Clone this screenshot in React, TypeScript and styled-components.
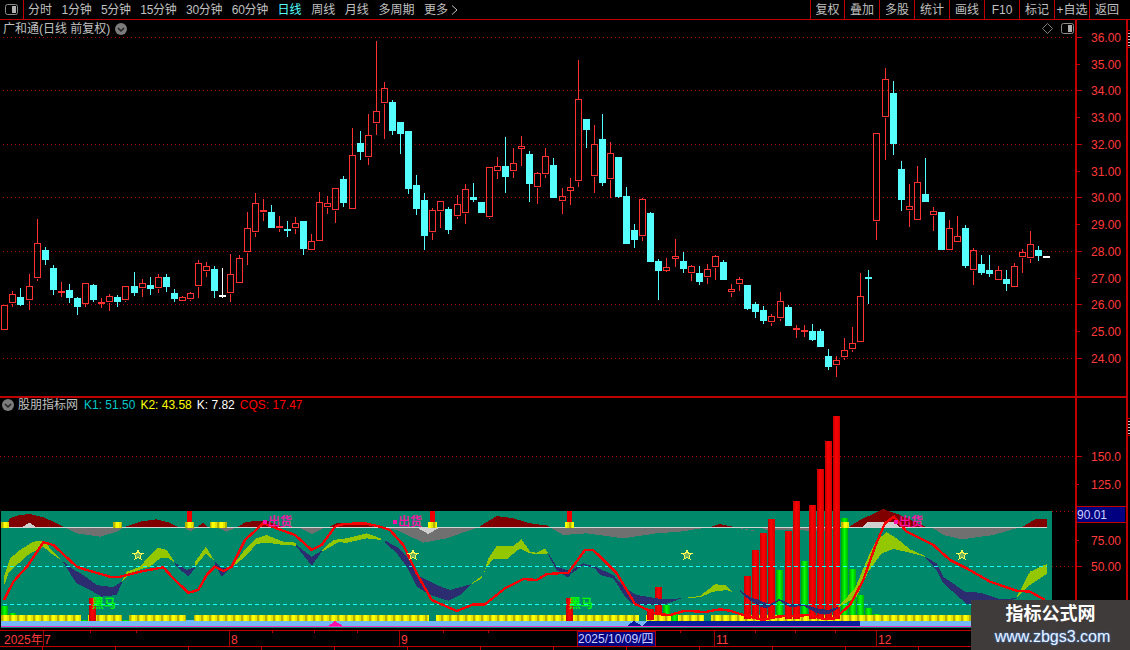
import React from "react";
import styled, { createGlobalStyle } from "styled-components";

const LINE = "#c00000";
const AXIS_RED = "#ff3a3a";
const FONT = `"Liberation Sans", "Noto Sans CJK SC", sans-serif`;

const GlobalStyle = createGlobalStyle`
  html, body { margin: 0; padding: 0; background: #000; overflow: hidden; }
`;

const Page = styled.div`
  position: relative;
  width: 1130px;
  height: 650px;
  overflow: hidden;
  background: #000;
  color: #c0c0c0;
  font: 12px/14px ${FONT};
`;

/* ---------- toolbar ---------- */
const Toolbar = styled.header`
  display: flex;
  height: 20px;
  box-sizing: border-box;
  border-bottom: 1px solid ${LINE};
`;
const LayoutButton = styled.div`
  width: 24px;
  box-sizing: border-box;
  border-right: 1px solid ${LINE};
  display: flex;
  align-items: center;
  justify-content: center;
  padding-bottom: 1px;
`;
const Periods = styled.nav`
  display: flex;
  align-items: center;
  gap: 9.6px;
  padding-left: 4px;
`;
const Period = styled.span<{ $active?: boolean; $tight?: boolean }>`
  color: ${(p) => (p.$active ? "#55ffff" : "#c0c0c0")};
  letter-spacing: ${(p) => (p.$tight ? "-0.3px" : "0")};
  display: inline-flex;
  align-items: center;
  gap: 3px;
  white-space: nowrap;
`;
const Actions = styled.div`
  display: flex;
  margin-left: auto;
`;
const Action = styled.div<{ $w?: number }>`
  box-sizing: border-box;
  width: ${(p) => p.$w ?? 35}px;
  padding-right: ${(p) => ((p.$w ?? 35) > 40 ? 6 : 0)}px;
  border-left: 1px solid ${LINE};
  display: flex;
  align-items: center;
  justify-content: center;
  white-space: nowrap;
`;

/* ---------- panes ---------- */
const Workspace = styled.div`
  display: flex;
  height: 610px;
`;
const ChartColumn = styled.div`
  width: 1077px;
  box-sizing: border-box;
  border-right: 2px solid ${LINE};
`;
const AxisColumn = styled.div`
  width: 51px;
  box-sizing: border-box;
  border-right: 2px solid ${LINE};
`;
const Rail = styled.div`
  width: 3px;
  position: relative;
`;
const RailChip = styled.div<{ $top: number }>`
  position: absolute;
  top: ${(p) => p.$top}px;
  left: 0;
  width: 3px;
  height: 18px;
  box-sizing: border-box;
  border-top: 1px solid ${LINE};
  border-bottom: 1px solid ${LINE};
  background: repeating-linear-gradient(#000 0 2px, #c8c8c8 2px 3px);
`;
const PricePane = styled.section`
  position: relative;
  height: 378px;
  box-sizing: border-box;
  border-bottom: 2px solid ${LINE};
`;
const IndicatorPane = styled.section`
  position: relative;
  height: 232px;
`;
const AxisCell = styled.div<{ $h: number }>`
  height: ${(p) => p.$h}px;
  box-sizing: border-box;
  &:first-child { border-bottom: 2px solid ${LINE}; }
`;
const ChartSvg = styled.svg`
  display: block;
  shape-rendering: crispEdges;
`;
const PaneTitle = styled.div`
  position: absolute;
  left: 3px;
  top: 2px;
  display: flex;
  align-items: center;
  gap: 5px;
  color: #c0c0c0;
  white-space: nowrap;
`;
const PaneTools = styled.div`
  position: absolute;
  right: 1px;
  top: 3px;
  display: flex;
  align-items: center;
  gap: 8px;
`;
const Legend = styled.div`
  position: absolute;
  left: 2px;
  top: 0px;
  display: flex;
  align-items: center;
  gap: 5px;
  white-space: nowrap;
  color: #c0c0c0;
`;
const LegendName = styled.span`
  margin: 0 1px 0 -1px;
`;
const LegendValue = styled.span<{ $c: string }>`
  color: ${(p) => p.$c};
`;
const AxisLabel = styled.text`
  font: 12px ${FONT};
  fill: ${AXIS_RED};
`;
const BoxLabel = styled(AxisLabel)`
  fill: #d0d0ff;
`;
const Mark = styled.text<{ $c: string }>`
  font: 12px ${FONT};
  fill: ${(p) => p.$c};
  stroke: ${(p) => p.$c};
  stroke-width: 0.35px;
`;

/* ---------- time axis ---------- */
const TimeAxis = styled.div`
  height: 17px;
  box-sizing: border-box;
  border-top: 1px solid ${LINE};
  border-bottom: 1px solid ${LINE};
`;
const BottomStrip = styled.div`
  height: 3px;
  background: repeating-linear-gradient(90deg, transparent 0 42px, ${LINE} 42px 43px, transparent 43px 73px);
`;

/* ---------- watermark ---------- */
const Watermark = styled.aside`
  position: absolute;
  left: 971px;
  top: 600px;
  width: 159px;
  height: 50px;
  background: #3f3b3b;
  display: flex;
  flex-direction: column;
  align-items: center;
  padding-top: 3px;
  box-sizing: border-box;
`;
const WatermarkTitle = styled.div`
  color: #fff;
  font: bold 18px/22px ${FONT};
`;
const WatermarkUrl = styled.div`
  color: #e8f2ff;
  font: 16px/20px ${FONT};
  margin: 2px 0 0 4px;
  text-shadow: 0 0 2px #3c8cff;
`;

/* ---------- data ---------- */
type C = [number, number, number, number, number];
const g = (y0: number, rows: C[]): C[] =>
  rows.map(([t, a, b, c, d]) => [t, y0 + a / 3, y0 + b / 3, y0 + c / 3, y0 + d / 3] as C);

const candles: C[] = [
  ...g(190, [
    [0, 345, 345, 420, 420], [0, 304, 313, 341, 351], [1, 294, 321, 345, 347], [0, 252, 289, 332, 360],
    [0, 87, 160, 266, 273], [1, 171, 180, 210, 225], [1, 225, 234, 300, 315], [0, 276, 304, 308, 320],
    [1, 282, 300, 324, 339], [1, 321, 324, 351, 375], [0, 280, 280, 342, 351], [1, 282, 285, 330, 336],
    [0, 324, 337, 337, 354], [0, 312, 319, 338, 363], [1, 315, 321, 336, 351], [0, 289, 289, 332, 335],
    [1, 246, 288, 309, 318], [0, 267, 280, 296, 321], [1, 261, 285, 297, 315], [0, 252, 262, 296, 309],
    [1, 252, 261, 291, 306], [1, 297, 309, 327, 336], [0, 318, 322, 335, 335], [0, 306, 310, 329, 333],
    [0, 210, 220, 290, 324], [0, 216, 229, 245, 261], [1, 228, 237, 303, 324], [2, 234, 316, 316, 324],
    [0, 192, 253, 311, 336], [0, 196, 205, 281, 282], [0, 66, 115, 188, 225], [0, 9, 40, 128, 141],
    [0, 27, 61, 68, 93],
  ]),
  ...g(30, [
    [1, 525, 546, 594, 594], [0, 558, 589, 596, 606], [1, 573, 598, 598, 621], [0, 561, 580, 596, 612],
    [1, 573, 573, 657, 675], [0, 612, 634, 660, 660], [0, 486, 517, 635, 635], [0, 498, 520, 533, 552],
    [0, 475, 475, 542, 579], [1, 438, 447, 519, 531], [0, 294, 376, 539, 539], [1, 303, 339, 366, 390],
    [0, 252, 316, 383, 405], [0, 33, 244, 281, 315], [0, 156, 175, 221, 327], [1, 210, 216, 303, 315],
    [1, 276, 276, 312, 372], [1, 303, 303, 477, 492], [1, 435, 465, 537, 555], [1, 489, 510, 618, 660],
    [0, 534, 541, 608, 630], [0, 514, 514, 545, 594], [1, 531, 537, 600, 612], [0, 495, 523, 560, 567],
    [0, 462, 478, 551, 582], [1, 459, 501, 510, 516], [1, 516, 516, 549, 549], [0, 412, 412, 563, 567],
    [0, 381, 409, 425, 447], [1, 321, 408, 441, 489], [0, 354, 400, 425, 444], [0, 318, 349, 358, 408],
    [1, 363, 372, 462, 516], [0, 426, 430, 473, 522],
  ]),
  ...g(50, [
    [0, 294, 319, 374, 384], [1, 324, 345, 444, 444], [0, 415, 439, 455, 492], [0, 384, 412, 423, 465],
    [0, 30, 148, 395, 411], [1, 207, 207, 240, 294], [0, 225, 283, 380, 429], [1, 192, 267, 399, 408],
    [0, 276, 310, 389, 444], [1, 321, 321, 441, 444], [1, 411, 438, 582, 582], [1, 522, 540, 570, 594],
    [0, 444, 448, 560, 573], [1, 486, 489, 636, 636], [1, 627, 633, 663, 750], [0, 624, 652, 663, 666],
    [0, 567, 618, 626, 651], [1, 606, 633, 657, 669], [0, 645, 649, 671, 693], [1, 648, 669, 696, 705],
    [0, 642, 658, 683, 702], [0, 615, 619, 653, 690], [1, 630, 636, 690, 690], [0, 702, 718, 728, 741],
    [0, 681, 688, 704, 723], [1, 705, 705, 777, 780], [1, 756, 762, 786, 804], [1, 768, 780, 813, 822],
    [0, 793, 799, 818, 828], [0, 726, 754, 806, 813], [1, 765, 771, 828, 828], [0, 825, 835, 835, 864],
    [0, 825, 841, 847, 861], [1, 822, 843, 870, 873], [1, 837, 843, 891, 891], [1, 897, 918, 951, 960],
    [0, 918, 931, 947, 981], [0, 864, 901, 923, 930], [0, 831, 880, 899, 906], [0, 669, 739, 878, 878],
    [1, 660, 682, 682, 762], [0, 250, 250, 515, 570], [0, 54, 88, 203, 330], [1, 93, 129, 282, 315],
    [1, 333, 357, 450, 483], [0, 402, 469, 482, 531], [0, 348, 397, 512, 513], [1, 324, 432, 456, 456],
    [0, 472, 484, 497, 543], [1, 486, 486, 600, 600], [0, 510, 535, 602, 602], [0, 498, 559, 578, 578],
    [1, 525, 534, 648, 654], [0, 594, 601, 662, 705], [1, 615, 642, 669, 675], [1, 615, 660, 672, 681],
    [0, 648, 661, 692, 692], [1, 660, 687, 702, 723], [0, 640, 649, 713, 713], [0, 597, 607, 623, 669],
    [0, 543, 583, 626, 639], [1, 588, 600, 618, 633], [2, 619, 619, 619, 619],
  ]),
];

type P = [number, number];
const z4 = (p: P[]): P[] => p.map(([x, y]) => [x / 3, 510 + y / 3]);
const z5 = (p: P[]): P[] => p.map(([x, y]) => [380 + x / 3, 510 + y / 3]);
const z6 = (p: P[]): P[] => p.map(([x, y]) => [740 + x / 3, 400 + y / 3]);
const pts = (p: P[]) => p.map(([x, y]) => `${x.toFixed(1)},${y.toFixed(1)}`).join(" ");
const band = (t: P[], b: P[]) => pts([...t, ...[...b].reverse()]);

const OLIVE = "#93c800";
const NAVY = "#2b2d70";
const DARKRED = "#800000";
const GRAY = "#707070";
const LIGHT = "#cfcfcf";

const ribbons: [string, string][] = [
  [OLIVE, band(z4([[12, 200], [30, 145], [60, 120], [100, 95], [130, 92], [160, 125], [185, 150]]), z4([[12, 228], [25, 190], [50, 165], [90, 130], [130, 110], [160, 135], [185, 150]]))],
  [NAVY, band(z4([[185, 150], [215, 175], [250, 195], [290, 225], [340, 232], [365, 215]]), z4([[185, 150], [210, 190], [230, 220], [270, 240], [305, 260], [350, 255], [365, 220]]))],
  [OLIVE, band(z4([[365, 215], [380, 185], [420, 170], [450, 135], [475, 113], [500, 120], [525, 158]]), z4([[365, 215], [385, 195], [420, 178], [450, 170], [480, 145], [505, 145], [525, 158]]))],
  [NAVY, band(z4([[525, 158], [560, 180], [585, 172]]), z4([[525, 165], [565, 200], [585, 175]]))],
  [OLIVE, band(z4([[585, 155], [618, 110], [645, 155]]), z4([[585, 170], [618, 130], [645, 155]]))],
  [NAVY, band(z4([[645, 155], [665, 175], [695, 170]]), z4([[645, 165], [665, 200], [695, 172]]))],
  [OLIVE, band(z4([[695, 170], [730, 125], [770, 85], [800, 75], [850, 95], [888, 98]]), z4([[695, 172], [730, 145], [770, 102], [800, 98], [850, 105], [888, 107]]))],
  [NAVY, band(z4([[888, 105], [935, 140], [965, 122]]), z4([[888, 108], [935, 167], [965, 125]]))],
  [OLIVE, band(z4([[965, 122], [1000, 90], [1040, 85], [1100, 70], [1142, 85]]), z4([[965, 125], [1015, 97], [1040, 98], [1100, 85], [1142, 90]]))],
  [NAVY, band(z5([[15, 92], [50, 110], [80, 140], [120, 200], [170, 225], [210, 240], [275, 222]]), z5([[15, 98], [50, 130], [80, 170], [110, 230], [150, 255], [205, 272], [240, 255], [275, 222]]))],
  [OLIVE, band(z5([[275, 220], [310, 195], [325, 145], [350, 108], [400, 108], [425, 88], [450, 125], [470, 128], [495, 115], [505, 130]]), z5([[275, 222], [305, 205], [320, 170], [340, 148], [380, 148], [420, 115], [450, 130], [480, 133], [505, 130]]))],
  [NAVY, band(z5([[505, 130], [530, 170], [575, 185]]), z5([[505, 135], [530, 180], [565, 203], [580, 180]]))],
  [NAVY, band(z5([[575, 180], [610, 160], [645, 170], [700, 195], [735, 235], [770, 255], [850, 268], [905, 265]]), z5([[575, 190], [610, 165], [645, 175], [660, 195], [700, 205], [735, 260], [760, 285], [800, 285], [850, 285], [905, 265]]))],
  [OLIVE, band(z5([[905, 265], [960, 258], [1005, 223], [1035, 225], [1055, 245], [1080, 240]]), z5([[905, 265], [960, 262], [1000, 245], [1040, 240], [1055, 245], [1080, 240]]))],
  [NAVY, band(z5([[1080, 240], [1110, 262], [1140, 270]]), z5([[1080, 245], [1110, 272], [1140, 288]]))],
  [NAVY, band(z6([[60, 602], [90, 612], [118, 597], [150, 612], [190, 612], [230, 625], [265, 630], [295, 620]]), z6([[60, 620], [80, 625], [118, 602], [150, 622], [190, 617], [230, 640], [265, 643], [295, 625]]))],
  [OLIVE, band(z6([[295, 620], [345, 565], [385, 470], [410, 420], [440, 397], [470, 415], [510, 448], [555, 468]]), z6([[295, 622], [350, 590], [385, 515], [425, 460], [460, 447], [510, 458], [555, 470]]))],
  [NAVY, band(z6([[555, 470], [590, 490], [610, 530], [675, 575], [720, 578], [780, 597], [830, 595]]), z6([[555, 472], [590, 510], [610, 550], [680, 612], [780, 610], [830, 595]]))],
  [OLIVE, band(z6([[830, 590], [870, 515], [920, 492]]), z6([[830, 592], [870, 555], [920, 522]]))],
];

const redLine: P[] = [
  ...z4([[12, 270], [40, 215], [85, 165], [130, 97], [160, 105], [230, 170], [260, 180], [330, 200], [360, 200], [420, 185], [490, 172], [520, 205], [565, 248], [595, 240], [620, 195], [645, 170], [670, 183], [695, 170], [735, 90], [790, 40], [830, 55], [885, 75], [935, 120], [965, 105], [1005, 50], [1030, 42], [1095, 40], [1140, 50]]),
  ...z5([[30, 60], [70, 105], [110, 190], [155, 270], [230, 303], [280, 283], [315, 283], [375, 235], [430, 207], [470, 210], [500, 192], [565, 188], [615, 120], [640, 120], [710, 190], [765, 282], [830, 312], [870, 315], [915, 302], [975, 306], [1020, 298], [1050, 302], [1090, 315], [1140, 328]]),
  ...z6([[70, 660], [110, 650], [140, 648], [215, 645], [250, 657], [285, 655], [330, 615], [370, 540], [405, 440], [435, 370], [462, 350], [500, 395], [580, 435], [630, 480], [680, 505], [750, 545], [830, 572], [870, 575], [915, 600]]),
];

const hills: [string, P[]][] = [
  [DARKRED, z4([[15, 52], [30, 25], [60, 15], [90, 12], [130, 22], [160, 35], [195, 52]])],
  [DARKRED, z4([[370, 52], [420, 35], [470, 28], [510, 38], [535, 52]])],
  [DARKRED, z4([[590, 52], [610, 38], [625, 52]])],
  [DARKRED, z4([[710, 52], [740, 35], [800, 32], [830, 45], [860, 52]])],
  [DARKRED, z4([[985, 52], [1010, 40], [1080, 40], [1100, 45], [1130, 52]])],
  [DARKRED, z5([[295, 52], [350, 18], [400, 25], [450, 40], [505, 47], [507, 52]])],
  [DARKRED, z5([[987, 52], [1020, 42], [1068, 52]])],
  [DARKRED, z6([[325, 382], [360, 360], [430, 327], [480, 345], [560, 382]])],
  [DARKRED, z6([[845, 382], [885, 358], [920, 357], [920, 382]])],
  [LIGHT, z4([[65, 52], [88, 38], [110, 52]])],
  [LIGHT, z6([[365, 382], [385, 365], [460, 365], [480, 382]])],
  [GRAY, z4([[195, 52], [230, 70], [300, 80], [350, 65], [372, 52]])],
  [GRAY, z4([[555, 52], [570, 65], [590, 52]])],
  [GRAY, z4([[650, 52], [680, 65], [710, 52]])],
  [GRAY, z4([[895, 52], [935, 72], [975, 52]])],
  [GRAY, z5([[0, 52], [50, 60], [130, 98], [200, 85], [295, 52]])],
  [LIGHT, z5([[110, 52], [145, 72], [180, 52]])],
  [GRAY, z5([[510, 52], [550, 75], [620, 70], [730, 85], [830, 70], [900, 65], [985, 52]])],
  [GRAY, z5([[1070, 52], [1100, 60], [1140, 65]])],
  [GRAY, z6([[60, 382], [80, 390], [170, 390], [250, 395], [302, 382]])],
  [GRAY, z6([[575, 382], [610, 405], [665, 418], [760, 405], [840, 382]])],
];

/* x centre, top, bottom */
const bigRed: [number, number, number][] = [
  ...[[22, 528], [46, 450], [70, 400], [94, 357], [145, 393], [169, 303], [217, 315], [241, 207], [265, 123], [289, 48]].map(
    ([x, y]) => [Math.round(740 + x / 3), 400 + y / 3, 619] as [number, number, number]
  ),
  [658, 587, 615], [650, 609, 620], [92, 598, 621], [569, 598, 621],
];
const greens: [number, number, number][] = [
  ...[[118, 510], [193, 483], [313, 354], [337, 507], [361, 585], [385, 624], [409, 642]].map(
    ([x, y]) => [Math.round(740 + x / 3), 400 + y / 3, 615] as [number, number, number]
  ),
  [666, 605, 615], [674, 613, 621], [4, 606, 615], [12, 613, 615], [84, 620, 621], [125, 620, 621],
];
const yellowBand: [number, number][] = [
  [1, 81], [88, 122], [129, 186], [194, 429], [436, 639], [646, 671], [678, 704], [711, 1047],
];
const chips: [number, number][] = [[1, 9], [113, 122], [185, 194], [210, 227], [428, 437], [565, 574], [841, 849]];
const stars: number[] = [138, 413, 687, 962];

const starPoints = (cx: number, cy: number, r: number) =>
  pts(
    Array.from({ length: 10 }, (_, i): P => {
      const a = -Math.PI / 2 + (i * Math.PI) / 5;
      const rr = i % 2 ? r * 0.45 : r;
      return [cx + rr * Math.cos(a), cy + rr * Math.sin(a)];
    })
  );

const priceY = (p: number) => 197.3 - (p - 30) * 26.75;
const prices = [36, 35, 34, 33, 32, 31, 30, 29, 28, 27, 26, 25, 24];

/* ---------- small drawings ---------- */
const LayoutIcon = () => (
  <svg width="13" height="11" viewBox="0 0 13 11">
    <rect x="0.5" y="0.5" width="12" height="10" rx="2" fill="none" stroke="#8c8c8c" />
    <rect x="7" y="2" width="4" height="7" fill="#b0b0b0" />
  </svg>
);
const ChevronBadge = () => (
  <svg width="12" height="12" viewBox="0 0 12 12">
    <circle cx="6" cy="6" r="6" fill="#7c7c7c" />
    <path d="M3 5l3 3 3-3" fill="none" stroke="#222" strokeWidth="1.5" />
  </svg>
);
const Diamond = () => (
  <svg width="11" height="11" viewBox="0 0 11 11">
    <path d="M5.5 0.5l5 5-5 5-5-5z" fill="none" stroke="#7c7c7c" />
  </svg>
);
const MoreChevron = () => (
  <svg width="7" height="10" viewBox="0 0 7 10">
    <path d="M1 0.5l5 4.5-5 4.5" fill="none" stroke="#c0c0c0" />
  </svg>
);

const Candle = ({ c, i }: { c: C; i: number }) => {
  const [t, wt, bt, bb, wb] = c;
  const x = Math.round(4.33 + 8.075 * i);
  const col = t === 0 ? "#ff3232" : t === 1 ? "#55ffff" : "#ffffff";
  if (bt === bb) {
    return (
      <g fill={col}>
        <rect x={x} y={wt} width={1} height={wb - wt} />
        <rect x={x - 3} y={bt} width={7} height={1.4} />
      </g>
    );
  }
  return (
    <g fill={col}>
      <rect x={x} y={wt} width={1} height={Math.max(0, bt - wt)} />
      <rect x={x} y={bb} width={1} height={Math.max(0, wb - bb)} />
      {t === 0 ? (
        <rect x={x - 2.5} y={Math.round(bt) + 0.5} width={6} height={Math.max(1, Math.round(bb - bt) - 1)} fill="none" stroke={col} />
      ) : (
        <rect x={x - 3} y={bt} width={7} height={bb - bt} />
      )}
    </g>
  );
};

const GridLine = ({ y, x1 = 3, x2 = 1075 }: { y: number; x1?: number; x2?: number }) => (
  <line x1={x1} x2={x2} y1={y} y2={y} stroke="#a80000" strokeDasharray="1 3" />
);

const Bar = ({ b, fill, w = 7 }: { b: [number, number, number]; fill: string; w?: number }) => (
  <rect x={b[0] - (w - 1) / 2} y={b[1]} width={w} height={b[2] - b[1]} fill={fill} />
);

export default function App() {
  const periods = ["1分钟", "5分钟", "15分钟", "30分钟", "60分钟"];
  const actions = ["复权", "叠加", "多股", "统计", "画线", "F10", "标记", "+自选"];
  return (
    <Page>
      <GlobalStyle />
      <Toolbar>
        <LayoutButton>
          <LayoutIcon />
        </LayoutButton>
        <Periods>
          <Period>分时</Period>
          {periods.map((p) => (
            <Period key={p} $tight>
              {p}
            </Period>
          ))}
          <Period $active>日线</Period>
          <Period>周线</Period>
          <Period>月线</Period>
          <Period>多周期</Period>
          <Period>
            更多
            <MoreChevron />
          </Period>
        </Periods>
        <Actions>
          {actions.map((a, i) => (
            <Action key={a} $w={i === 0 ? 34 : 35}>
              {a}
            </Action>
          ))}
          <Action $w={41}>返回</Action>
        </Actions>
      </Toolbar>

      <Workspace>
        <ChartColumn>
          <PricePane>
            <ChartSvg width={1075} height={376} viewBox="0 20 1075 376">
              {[36, 34, 32, 30, 28, 26, 24].map((p) => (
                <GridLine key={p} y={Math.round(priceY(p)) + 0.5} />
              ))}
              {candles.map((c, i) => (
                <Candle key={i} c={c} i={i} />
              ))}
            </ChartSvg>
            <PaneTitle>
              <span>广和通(日线 前复权)</span>
              <ChevronBadge />
            </PaneTitle>
            <PaneTools>
              <Diamond />
              <LayoutIcon />
            </PaneTools>
          </PricePane>

          <IndicatorPane>
            <ChartSvg width={1075} height={232} viewBox="0 398 1075 232">
              <defs>
                <pattern id="stripe" x="1" y="0" width="8" height="10" patternUnits="userSpaceOnUse">
                  <rect width="2" height="10" fill="#b4b400" />
                  <rect x="2" width="1" height="10" fill="#e0e000" />
                  <rect x="3" width="3" height="10" fill="#ffff00" />
                  <rect x="6" width="2" height="10" fill="#e4e400" />
                </pattern>
                <linearGradient id="redBar" x1="0" x2="1" y1="0" y2="0">
                  <stop offset="0" stopColor="#c00000" />
                  <stop offset="0.45" stopColor="#ff0000" />
                  <stop offset="1" stopColor="#d00000" />
                </linearGradient>
                <linearGradient id="greenBar" x1="0" x2="1" y1="0" y2="0">
                  <stop offset="0" stopColor="#00a000" />
                  <stop offset="0.5" stopColor="#00ff00" />
                  <stop offset="1" stopColor="#00b000" />
                </linearGradient>
              </defs>

              <GridLine y={456.5} x1={0} />
              <GridLine y={511.5} x1={1052} />
              <GridLine y={566.5} x1={1052} />

              <rect x={1} y={511} width={1051} height={117} fill="#00886a" />

              {hills.map(([c, p], i) => (
                <polygon key={i} points={pts(p)} fill={c} />
              ))}
              <rect x={9} y={527} width={1038} height={1} fill="#d4d4d4" />

              <rect x={1} y={621} width={1051} height={5} fill="#74b8f4" />
              <rect x={186} y={620} width={8} height={1} fill="#74b8f4" />
              <polygon points="627,626 634,621 642,626 647,621 860,621 860,626" fill="#0a1f9c" />
              <polygon points={pts(z4([[985, 348], [1005, 333], [1030, 348]]))} fill="#ff10a8" />
              <rect x={1} y={626} width={1051} height={1} fill="#ff30c8" />

              {yellowBand.map(([a, b]) => (
                <rect key={a} x={a} y={615} width={b - a} height={6} fill="url(#stripe)" />
              ))}

              {greens.map((b, i) => (
                <Bar key={i} b={b} fill="url(#greenBar)" />
              ))}
              {bigRed.map((b, i) => (
                <Bar key={i} b={b} fill="url(#redBar)" />
              ))}
              {[189, 432, 569].map((x) => (
                <rect key={x} x={x - 2} y={511} width={5} height={11} fill="#f00000" />
              ))}
              {chips.map(([a, b]) => (
                <rect key={a} x={a} y={522} width={b - a} height={6} fill="url(#stripe)" />
              ))}

              {ribbons.map(([c, p], i) => (
                <polygon key={i} points={p} fill={c} />
              ))}

              {[566.5, 604.5].map((y) => (
                <line key={y} x1={3} x2={1047} y1={y} y2={y} stroke="#18ffff" strokeDasharray="4 3" />
              ))}

              <polyline points={pts(redLine)} fill="none" stroke="#f80000" strokeWidth={2.4} />

              {stars.map((x) => (
                <polygon key={x} points={starPoints(x, 555, 5)} fill="#70b060" stroke="#ffff50" strokeWidth={1} />
              ))}

              {[92, 569].map((x) => (
                <Mark key={x} $c="#00ff00" x={x} y={608}>
                  黑马
                </Mark>
              ))}
              {[268, 398, 899].map((x) => (
                <g key={x}>
                  <circle cx={x - 3} cy={522} r={2.5} fill="#ff10a8" />
                  <Mark $c="#ff10a8" x={x} y={526}>
                    出货
                  </Mark>
                </g>
              ))}
            </ChartSvg>
            <Legend>
              <ChevronBadge />
              <LegendName>股朋指标网</LegendName>
              <LegendValue $c="#00c8c8">K1: 51.50</LegendValue>
              <LegendValue $c="#ffff00">K2: 43.58</LegendValue>
              <LegendValue $c="#ffffff">K: 7.82</LegendValue>
              <LegendValue $c="#ff0000">CQS: 17.47</LegendValue>
            </Legend>
          </IndicatorPane>
        </ChartColumn>

        <AxisColumn>
          <AxisCell $h={378}>
            <ChartSvg width={49} height={376} viewBox="1077 20 49 376">
              {prices.map((p) => {
                const y = Math.round(priceY(p));
                return (
                  <g key={p}>
                    <rect x={1077} y={y} width={p % 2 === 0 ? 5 : 3} height={1} fill={LINE} />
                    <AxisLabel x={1121} y={y + 5} textAnchor="end">
                      {p.toFixed(2)}
                    </AxisLabel>
                  </g>
                );
              })}
            </ChartSvg>
          </AxisCell>
          <AxisCell $h={232}>
            <ChartSvg width={49} height={232} viewBox="1077 398 49 232">
              {[
                [456, 5, "150.0"],
                [484, 2, "125.0"],
                [540, 2, "75.00"],
                [566, 5, "50.00"],
              ].map(([y, w, t]) => (
                <g key={t as string}>
                  <rect x={1077} y={y as number} width={w as number} height={1} fill={LINE} />
                  <AxisLabel x={1121} y={(y as number) + 5} textAnchor="end">
                    {t}
                  </AxisLabel>
                </g>
              ))}
              <rect x={1077} y={506} width={49} height={1} fill={LINE} />
              <rect x={1077} y={507} width={48} height={15} fill="#000080" />
              <rect x={1077} y={522} width={49} height={1} fill={LINE} />
              <BoxLabel x={1077} y={519}>
                90.01
              </BoxLabel>
            </ChartSvg>
          </AxisCell>
        </AxisColumn>
        <Rail>
          <RailChip $top={10} />
          <RailChip $top={398} />
        </Rail>
      </Workspace>

      <TimeAxis>
        <ChartSvg width={1130} height={15} viewBox="0 631 1130 15">
          {[90, 136, 272, 314, 357, 443, 488, 680, 755, 795, 835].map((x) => (
            <rect key={x} x={x} y={631} width={1} height={2} fill={LINE} />
          ))}
          {[43, 229, 399, 714, 876].map((x) => (
            <rect key={x} x={x} y={631} width={1} height={15} fill="#a00000" />
          ))}
          <AxisLabel x={4} y={644}>2025年</AxisLabel>
          <AxisLabel x={44} y={644}>7</AxisLabel>
          <AxisLabel x={231} y={644}>8</AxisLabel>
          <AxisLabel x={401} y={644}>9</AxisLabel>
          <AxisLabel x={716} y={644}>11</AxisLabel>
          <AxisLabel x={878} y={644}>12</AxisLabel>
          <rect x={577} y={631} width={78} height={15} fill="#000080" stroke="#b00000" />
          <BoxLabel x={578} y={643}>2025/10/09/四</BoxLabel>
        </ChartSvg>
      </TimeAxis>
      <BottomStrip />

      <Watermark>
        <WatermarkTitle>指标公式网</WatermarkTitle>
        <WatermarkUrl>www.zbgs3.com</WatermarkUrl>
      </Watermark>
    </Page>
  );
}
